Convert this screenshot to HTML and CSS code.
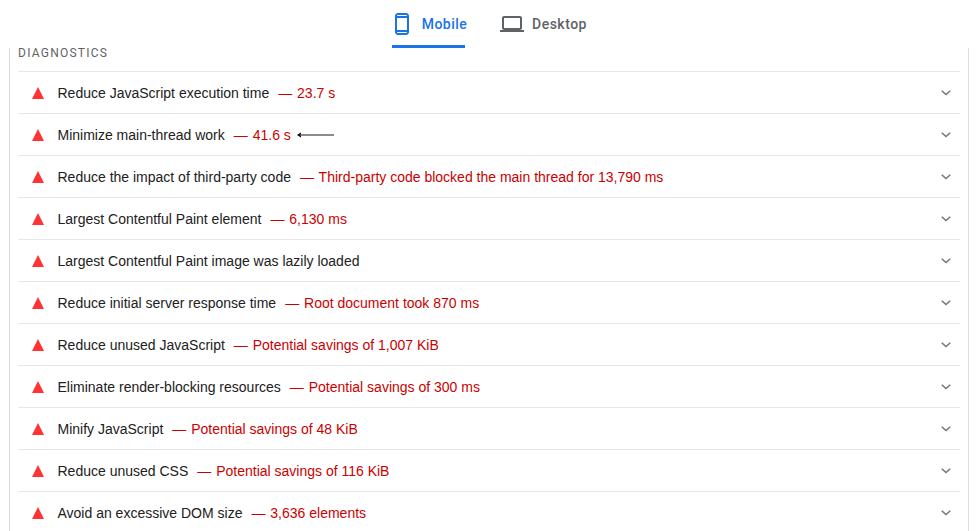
FILE: index.html
```html
<!doctype html>
<html>
    <head>
        <meta charset="utf-8" />
        <title>PageSpeed Insights</title>
        <link rel="stylesheet" href="styles.css">
    </head>
    <body>
        <div class="tabs">
            <a class="tab active">
                <svg class="tab-icon" width="24" height="24" viewBox="0 0 24 24"><path fill="currentColor" d="M16 1H8C6.34 1 5 2.34 5 4v16c0 1.66 1.34 3 3 3h8c1.66 0 3-1.34 3-3V4c0-1.66-1.34-3-3-3zm1 17H7V6h10v12zm0 2c0 .55-.45 1-1 1H8c-.55 0-1-.45-1-1h10zM7 4c0-.55.45-1 1-1h8c.55 0 1 .45 1 1H7z"/></svg>
                Mobile
            </a>
            <a class="tab">
                <svg class="tab-icon" width="24" height="24" viewBox="0 0 24 24"><path fill="currentColor" d="M20 18c1.1 0 2-.9 2-2V6c0-1.1-.9-2-2-2H4c-1.1 0-2 .9-2 2v10c0 1.1.9 2 2 2H0v2h24v-2h-4zM4 6h16v10H4V6z"/></svg>
                Desktop
            </a>
        </div>

        <div class="panel">
            <div class="title">DIAGNOSTICS</div>

            <div class="row">
                <span class="triangle"></span>
                <span class="label">Reduce JavaScript execution time</span>
                <span class="value"><span class="dash">—</span> 23.7 s</span>
                <svg class="chevron" width="10" height="6" viewBox="0 0 10 6"><path d="M.7.7 5 4.6 9.3.7" fill="none" stroke="#757575" stroke-width="1.5"/></svg>
            </div>
            <div class="row">
                <span class="triangle"></span>
                <span class="label">Minimize main-thread work</span>
                <span class="value"><span class="dash">—</span> 41.6 s</span>
                <svg class="arrow" width="37" height="6" viewBox="0 0 37 6"><path d="M0 3 4 .5v5z" fill="#000"/><path d="M3 3h34" stroke="#666" stroke-width="1.4"/></svg>
                <svg class="chevron" width="10" height="6" viewBox="0 0 10 6"><path d="M.7.7 5 4.6 9.3.7" fill="none" stroke="#757575" stroke-width="1.5"/></svg>
            </div>
            <div class="row">
                <span class="triangle"></span>
                <span class="label">Reduce the impact of third-party code</span>
                <span class="value"><span class="dash">—</span> Third-party code blocked the main thread for 13,790 ms</span>
                <svg class="chevron" width="10" height="6" viewBox="0 0 10 6"><path d="M.7.7 5 4.6 9.3.7" fill="none" stroke="#757575" stroke-width="1.5"/></svg>
            </div>
            <div class="row">
                <span class="triangle"></span>
                <span class="label">Largest Contentful Paint element</span>
                <span class="value"><span class="dash">—</span> 6,130 ms</span>
                <svg class="chevron" width="10" height="6" viewBox="0 0 10 6"><path d="M.7.7 5 4.6 9.3.7" fill="none" stroke="#757575" stroke-width="1.5"/></svg>
            </div>
            <div class="row">
                <span class="triangle"></span>
                <span class="label">Largest Contentful Paint image was lazily loaded</span>
                <svg class="chevron" width="10" height="6" viewBox="0 0 10 6"><path d="M.7.7 5 4.6 9.3.7" fill="none" stroke="#757575" stroke-width="1.5"/></svg>
            </div>
            <div class="row">
                <span class="triangle"></span>
                <span class="label">Reduce initial server response time</span>
                <span class="value"><span class="dash">—</span> Root document took 870 ms</span>
                <svg class="chevron" width="10" height="6" viewBox="0 0 10 6"><path d="M.7.7 5 4.6 9.3.7" fill="none" stroke="#757575" stroke-width="1.5"/></svg>
            </div>
            <div class="row">
                <span class="triangle"></span>
                <span class="label">Reduce unused JavaScript</span>
                <span class="value"><span class="dash">—</span> Potential savings of 1,007 KiB</span>
                <svg class="chevron" width="10" height="6" viewBox="0 0 10 6"><path d="M.7.7 5 4.6 9.3.7" fill="none" stroke="#757575" stroke-width="1.5"/></svg>
            </div>
            <div class="row">
                <span class="triangle"></span>
                <span class="label">Eliminate render-blocking resources</span>
                <span class="value"><span class="dash">—</span> Potential savings of 300 ms</span>
                <svg class="chevron" width="10" height="6" viewBox="0 0 10 6"><path d="M.7.7 5 4.6 9.3.7" fill="none" stroke="#757575" stroke-width="1.5"/></svg>
            </div>
            <div class="row">
                <span class="triangle"></span>
                <span class="label">Minify JavaScript</span>
                <span class="value"><span class="dash">—</span> Potential savings of 48 KiB</span>
                <svg class="chevron" width="10" height="6" viewBox="0 0 10 6"><path d="M.7.7 5 4.6 9.3.7" fill="none" stroke="#757575" stroke-width="1.5"/></svg>
            </div>
            <div class="row">
                <span class="triangle"></span>
                <span class="label">Reduce unused CSS</span>
                <span class="value"><span class="dash">—</span> Potential savings of 116 KiB</span>
                <svg class="chevron" width="10" height="6" viewBox="0 0 10 6"><path d="M.7.7 5 4.6 9.3.7" fill="none" stroke="#757575" stroke-width="1.5"/></svg>
            </div>
            <div class="row">
                <span class="triangle"></span>
                <span class="label">Avoid an excessive DOM size</span>
                <span class="value"><span class="dash">—</span> 3,636 elements</span>
                <svg class="chevron" width="10" height="6" viewBox="0 0 10 6"><path d="M.7.7 5 4.6 9.3.7" fill="none" stroke="#757575" stroke-width="1.5"/></svg>
            </div>
        </div>
    </body>
</html>
```

FILE: styles.css
```css
* {
    margin: 0;
    padding: 0;
    box-sizing: border-box;
}

html, body {
    width: 100%;
    height: 100%;
    overflow: hidden;
    background: #fff;
}

body {
    font-family: "Liberation Sans", Arial, sans-serif;
    font-size: 14px;
    color: #212121;
}

.tabs {
    display: flex;
    justify-content: center;
    gap: 35px;
    height: 48px;
    padding-left: 2px;
}

.tab {
    display: flex;
    flex: none;
    align-items: center;
    gap: 8px;
    height: 48px;
    padding-bottom: 1px;
    font-family: Roboto, sans-serif;
    font-size: 14px;
    font-weight: 500;
    letter-spacing: 0.5px;
    color: #5f6368;
}

.tab.active {
    width: 73px;
    justify-content: center;
    padding: 2px 0 0;
    color: #1a73e8;
    border-bottom: 3px solid #1a73e8;
}

.tab-icon {
    flex: none;
}

.panel {
    margin: 0 8px 0 9px;
    padding: 0 8px;
    border-left: 1px solid #dadce0;
    border-right: 1px solid #dadce0;
}

.title {
    height: 23px;
    font-family: Roboto, sans-serif;
    font-size: 12px;
    line-height: 11px;
    letter-spacing: 1.25px;
    color: #5f6368;
}

.row {
    display: flex;
    align-items: center;
    height: 42px;
    padding-left: 14px;
    border-top: 1px solid #e8e8e8;
    position: relative;
}

.triangle {
    width: 0;
    height: 0;
    margin-right: 13.5px;
    border-left: 6.5px solid transparent;
    border-right: 6.5px solid transparent;
    border-bottom: 12px solid #ff3333;
}

.value {
    margin-left: 9px;
    color: #c00;
}

.dash {
    margin-right: 1px;
}

.arrow {
    margin-left: 6px;
}

.chevron {
    position: absolute;
    right: 9px;
    top: 18px;
}
```
